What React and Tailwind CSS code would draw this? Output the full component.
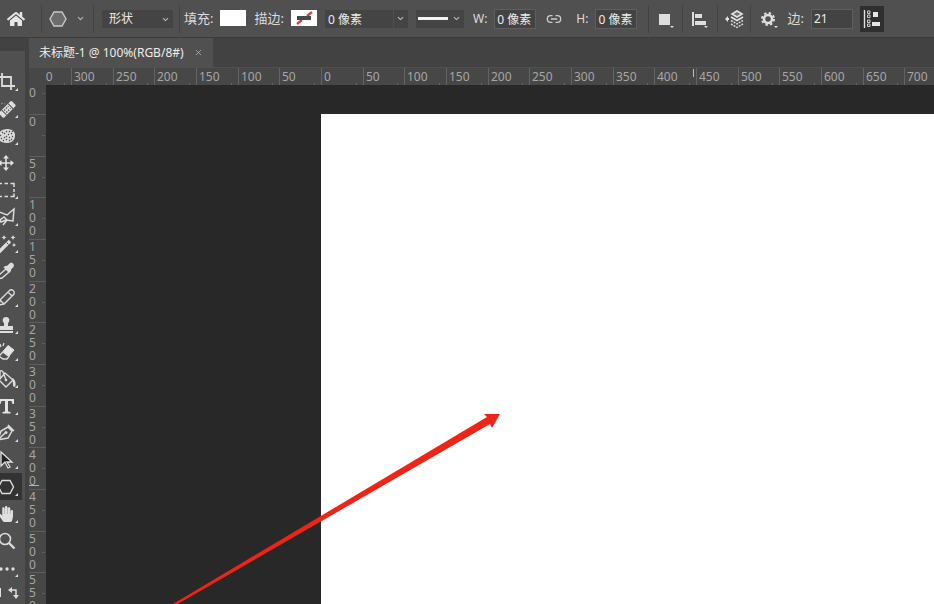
import { Search, ChevronDown, Link2, X } from "lucide-react";
import { FaHome, FaHandPaper } from "react-icons/fa";

// 50 document units on screen
const STEP = 125 / 3;

const stepSize = (index) =>
  Math.round((index + 1) * STEP) - Math.round(index * STEP);

const horizontalMarks = Array.from({ length: 22 }, (_, i) => i - 7);
const verticalMarks = Array.from({ length: 13 }, (_, i) => i - 1);

const SpongeIcon = () => (
  <svg viewBox="0 0 20 20" className="w-5 h-5 shrink-0" fill="none">
    <path
      d="M2 11c0-5 4-8 9-8 4 0 8 2 8 6s-2 8-8 8c-5 0-9-2-9-6Z"
      fill="#dadada"
    />
    <path
      d="M4 9l1 1M6 6l1 1M8 8l1-1M10 5l1 1M13 5l1 1M12 8l1 1M15 8l1-1M17 10l-1 1M5 13l1-1M8 11l1 1M10 10l1 1M7 14l1 1M10 14l1-1M13 12l1-1M13 15l1-1M16 13l-1 1M16 5l.8.8"
      stroke="#4c4c4c"
      strokeWidth="1.100"
    />
  </svg>
);

const BandageIcon = () => (
  <svg viewBox="0 0 20 20" className="w-5 h-5 shrink-0" fill="none">
    <path d="M2 9c0-4 4-5 7-4" stroke="#c6c6c6" strokeDasharray="1 2" />
    <g transform="rotate(-45 11 10)">
      <rect x="2" y="7" width="18" height="7" rx="1.5" fill="#dedede" />
      <path d="M6.500 7v7M15.500 7v7" stroke="#505050" />
      <path
        d="M8 9h6M8 12h6"
        stroke="#505050"
        strokeWidth="1.4"
        strokeDasharray="1.4 1.2"
      />
    </g>
  </svg>
);

const CropIcon = () => (
  <svg viewBox="0 0 20 20" className="w-5 h-5 shrink-0" fill="none">
    <path d="M6 1v13h13M1 5h14v13" stroke="#dcdcdc" strokeWidth="1.8" />
  </svg>
);

const MoveIcon = () => (
  <svg viewBox="0 0 20 20" className="w-5 h-5 shrink-0">
    <path d="M10 4v12M4 10h12" stroke="#e2e2e2" strokeWidth="1.6" />
    <path
      d="M10 2l3 3.500H7ZM10 18l3-3.500H7ZM2 10l3.500-3v6ZM18 10l-3.500-3v6Z"
      fill="#e2e2e2"
    />
  </svg>
);

const MarqueeIcon = () => (
  <svg viewBox="0 0 20 20" className="w-5 h-5 shrink-0" fill="none">
    <path
      d="M2 3.500h4M8.500 3.500h3.500M14.500 3.500H18V7M18 9v3M18 13.500v3h-3.500M12 16.500H8.500M6 16.500H2"
      stroke="#dcdcdc"
      strokeWidth="1.5"
    />
  </svg>
);

const LassoIcon = () => (
  <svg viewBox="0 0 20 20" className="w-5 h-5 shrink-0" fill="none">
    <path
      d="M1 4l10 4 7-6-1 12-7-1-5 2-1-2 4-3 3 3-4 5"
      stroke="#dcdcdc"
      strokeWidth="1.5"
    />
  </svg>
);

const WandIcon = () => (
  <svg viewBox="0 0 20 20" className="w-5 h-5 shrink-0">
    <path d="M3 18L14 7" stroke="#dcdcdc" strokeWidth="3.400" />
    <path d="M10.500 8.500l2 2" stroke="#505050" />
    <path
      d="M8 1l.8 1.700 1.700.8-1.700.8L8 6l-.8-1.700-1.700-.8 1.700-.8ZM17 1l.8 1.700 1.700.8-1.700.8L17 6l-.8-1.700-1.700-.8 1.700-.8ZM18 9l.7 1.300L20 11l-1.300.7L18 13l-.7-1.300L16 11l1.300-.7Z"
      fill="#dcdcdc"
    />
  </svg>
);

const DropperIcon = () => (
  <svg viewBox="0 0 20 20" className="w-5 h-5 shrink-0">
    <path
      d="M10 8l3 3-7 6-4 1 1-4Z"
      fill="none"
      stroke="#dcdcdc"
      strokeWidth="1.4"
    />
    <path
      d="M10 5l1.500-.5L14 2c2-1 5 1 3.500 4L15 8.500V10l-1.500 1.500-6-5L9 5Z"
      fill="#dcdcdc"
    />
  </svg>
);

const PencilIcon = () => (
  <svg viewBox="0 0 20 20" className="w-5 h-5 shrink-0" fill="none">
    <path
      d="M3 17l1-5L14 2c2-1 5 1 4 4L8 16ZM12 4l4 4M4 12l4 4"
      stroke="#dcdcdc"
      strokeWidth="1.4"
    />
  </svg>
);

const StampIcon = () => (
  <svg viewBox="0 0 20 20" className="w-5 h-5 shrink-0" fill="#dedede">
    <path d="M10 2c4 0 4 4 2 6v3h5v4H3v-4h5V8C6 6 6 2 10 2ZM3 16h14v2H3Z" />
  </svg>
);

const EraserIcon = () => (
  <svg viewBox="0 0 20 20" className="w-5 h-5 shrink-0" fill="none">
    <path d="M4 2l1 3M8 1l-1 3M2 7l2 1" stroke="#dcdcdc" strokeWidth="1.300" />
    <path d="M12 3.500l6 4.500-5 6-6-4.500Z" fill="#e4e4e4" stroke="#e4e4e4" />
    <path d="M7 10l6 4.500-2 2.500H7l-4-3Z" stroke="#dcdcdc" strokeWidth="1.4" />
  </svg>
);

const BucketIcon = () => (
  <svg viewBox="0 0 20 20" className="w-5 h-5 shrink-0" fill="none">
    <path
      d="M9 4l8 7-7 7-7-7ZM10 11L7 3C6 1 4 1 4 4v6"
      stroke="#dcdcdc"
      strokeWidth="1.4"
    />
    <circle cx="10" cy="11" r="1.300" fill="#dcdcdc" />
    <path d="M16 9c3 1 4 4 3.500 8-1 1.500-2.500 1-2.500-1 0-3-.5-4-1-7Z" fill="#dcdcdc" />
  </svg>
);

const TypeIcon = () => (
  <svg viewBox="0 0 20 20" className="w-5 h-5 shrink-0" fill="#e2e2e2">
    <path d="M3 3h15v5h-1.500L15.500 5H12v10.500l2.500.5v1.500h-8V16l2.500-.5V5H5.500l-1 3H3Z" />
  </svg>
);

const PenIcon = () => (
  <svg viewBox="0 0 20 20" className="w-5 h-5 shrink-0" fill="none">
    <path
      d="M2 17L5 8l7-4 4 4-4 7ZM3 16l6-6M12 2l6 6"
      stroke="#dcdcdc"
      strokeWidth="1.5"
    />
    <circle cx="10" cy="9.500" r="1.5" fill="#dcdcdc" />
  </svg>
);

const PointerIcon = () => (
  <svg viewBox="0 0 20 20" className="w-5 h-5 shrink-0">
    <path
      d="M5 2v14l4-4 3 6 2-1-3-5h5Z"
      fill="#222222"
      stroke="#e2e2e2"
      strokeWidth="1.3"
    />
  </svg>
);

const HexagonIcon = () => (
  <svg viewBox="0 0 20 20" className="w-5 h-5 shrink-0">
    <path
      d="M6 3h8l4 7-4 7H6L2 10Z"
      fill="#6c6c6c"
      stroke="#c8c8c8"
      strokeWidth="1.4"
    />
  </svg>
);

const SelectedHexagonIcon = () => (
  <svg viewBox="0 0 20 20" className="w-5 h-5 shrink-0" fill="none">
    <path
      d="M6 3.500h8l3.500 6.500-3.500 6.500H6L2.500 10Z"
      stroke="#dcdcdc"
      strokeWidth="1.4"
    />
  </svg>
);

const ZoomIcon = () => (
  <svg viewBox="0 0 20 20" className="w-5 h-5 shrink-0" fill="none">
    <circle cx="9" cy="8" r="5.500" stroke="#dcdcdc" strokeWidth="1.600" />
    <path d="M13 12l5.500 5.500" stroke="#dcdcdc" strokeWidth="2.400" />
  </svg>
);

const MoreIcon = () => (
  <svg viewBox="0 0 20 20" className="w-5 h-5 shrink-0" fill="#dedede">
    <circle cx="5" cy="11" r="1.700" />
    <circle cx="11" cy="11" r="1.700" />
    <circle cx="17" cy="11" r="1.700" />
  </svg>
);

const tools = [
  { label: "裁剪工具", icon: <CropIcon />, more: true },
  { label: "污点修复画笔工具", icon: <BandageIcon />, more: true },
  { label: "海绵工具", icon: <SpongeIcon />, more: true },
  { label: "移动工具", icon: <MoveIcon />, more: false },
  { label: "矩形选框工具", icon: <MarqueeIcon />, more: true },
  { label: "多边形套索工具", icon: <LassoIcon />, more: true },
  { label: "魔棒工具", icon: <WandIcon />, more: true },
  { label: "吸管工具", icon: <DropperIcon />, more: false },
  { label: "铅笔工具", icon: <PencilIcon />, more: true },
  { label: "仿制图章工具", icon: <StampIcon />, more: true },
  { label: "橡皮擦工具", icon: <EraserIcon />, more: true },
  { label: "油漆桶工具", icon: <BucketIcon />, more: true },
  { label: "文字工具", icon: <TypeIcon />, more: true },
  { label: "钢笔工具", icon: <PenIcon />, more: true },
  { label: "路径选择工具", icon: <PointerIcon />, more: true },
  {
    label: "多边形工具",
    icon: <SelectedHexagonIcon />,
    more: true,
    active: true,
  },
  {
    label: "抓手工具",
    icon: <FaHandPaper className="w-4 h-4 mx-0.5 text-[#e0e0e0]" />,
    more: true,
  },
  { label: "缩放工具", icon: <ZoomIcon />, more: false },
  { label: "编辑工具栏", icon: <MoreIcon />, more: true },
];

const Corner = () => (
  <svg viewBox="0 0 4 4" className="absolute right-1 bottom-1 w-[3px] h-[3px]">
    <path d="M4 0v4H0Z" fill="#e0e0e0" />
  </svg>
);

const Separator = () => <div className="w-px h-7 shrink-0 bg-[#434343]" />;

const Arrow = () => (
  <ChevronDown className="w-[9px] h-[9px] text-[#b8b8b8]" strokeWidth={3} />
);

const Field = ({ id, label, value }) => (
  <div className="flex items-center gap-[7px] shrink-0">
    <label htmlFor={id} className="text-[#dcdcdc]">
      {label}
    </label>
    <input
      id={id}
      defaultValue={value}
      className="w-[42px] h-5 px-[2px] bg-[#434343] border border-[#5e5e5e] text-[#ececec]"
    />
  </div>
);

const OptionsBar = () => (
  <header className="flex items-center h-[38px] shrink-0 pl-[7px] bg-[#505050] border-b border-[#3c3c3c] text-xs">
    <button aria-label="主页" className="shrink-0 mr-4">
      <FaHome className="w-[18px] h-[18px] text-[#e6e6e6]" />
    </button>
    <Separator />
    <button
      aria-label="工具预设"
      className="flex items-center gap-2 shrink-0 ml-[6px] mr-2"
    >
      <HexagonIcon />
      <Arrow />
    </button>
    <Separator />
    <div className="relative shrink-0 ml-2 mr-[6px]">
      <select
        aria-label="工具模式"
        className="appearance-none w-[71px] h-[18px] pl-[7px] bg-[#444444] text-[#ececec]"
      >
        <option>形状</option>
        <option>路径</option>
        <option>像素</option>
      </select>
      <div className="absolute right-[3px] top-[5px] pointer-events-none">
        <Arrow />
      </div>
    </div>
    <Separator />
    <div className="flex items-center gap-[7px] shrink-0 ml-1 mr-2">
      <label htmlFor="fill" className="text-[13px] text-[#dcdcdc]">
        填充:
      </label>
      <button id="fill" className="w-[26px] h-4 bg-white" />
    </div>
    <div className="flex items-center gap-[7px] shrink-0 mr-2">
      <label htmlFor="stroke" className="text-[13px] text-[#dcdcdc]">
        描边:
      </label>
      <button id="stroke" className="w-[26px] h-4 bg-white">
        <svg viewBox="0 0 26 16" className="w-[26px] h-4">
          <path
            d="M6 14l5-4M16 6l5-4"
            stroke="#c44"
            strokeWidth="2.400"
          />
          <rect x="6" y="6" width="14" height="4" fill="#484848" />
        </svg>
      </button>
    </div>
    <div className="flex shrink-0 gap-px mr-2">
      <input
        aria-label="描边宽度"
        defaultValue="0 像素"
        className="w-[68px] h-[18px] px-[3px] bg-[#444444] text-[#ececec]"
      />
      <button
        aria-label="描边宽度选项"
        className="flex items-center justify-center w-[14px] h-[18px] bg-[#444444]"
      >
        <Arrow />
      </button>
    </div>
    <button
      aria-label="描边类型"
      className="flex items-center gap-1 shrink-0 w-12 h-[18px] pl-[2px] mr-[9px] bg-[#444444]"
    >
      <span className="w-[30px] h-[3px] bg-[#f2f2f2]" />
      <Arrow />
    </button>
    <Field id="width" label="W:" value="0 像素" />
    <button
      aria-label="链接宽度和高度"
      className="shrink-0 ml-[10px] mr-[14px]"
    >
      <Link2 className="w-4 h-4 text-[#cccccc]" />
    </button>
    <Field id="height" label="H:" value="0 像素" />
    <div className="flex items-center shrink-0 ml-[11px]">
      <Separator />
      <button aria-label="路径操作" className="flex justify-center w-[33px]">
        <svg viewBox="0 0 20 20" className="w-5 h-5" fill="#dedede">
          <path d="M3 5h11v11H3ZM14 17h4l-2 2Z" />
        </svg>
      </button>
      <Separator />
      <button aria-label="路径对齐方式" className="flex justify-center w-[34px]">
        <svg viewBox="0 0 20 20" className="w-5 h-5" fill="#dedede">
          <path d="M2 3h2v14H2ZM5 5h7v4H5ZM5 12h11v4H5ZM14 17h4l-2 2Z" />
        </svg>
      </button>
      <Separator />
      <button aria-label="路径排列方式" className="flex justify-center w-8">
        <svg viewBox="0 0 20 20" className="w-5 h-5" fill="none">
          <path
            d="M13 2l5 3-5 3-5-3Z"
            fill="#707070"
            stroke="#e4e4e4"
            strokeWidth="1.600"
          />
          <path
            d="M7 8l6 3.500L19 8"
            stroke="#e0e0e0"
            strokeWidth="1.800"
          />
          <path
            d="M7 11.500l6 3.500 6-3.500M7 15l6 3.500 6-3.500"
            stroke="#d4d4d4"
            strokeWidth="1.500"
            strokeDasharray="2 1"
          />
          <path d="M1 10l3-3v2h1v2H4v2Z" fill="#e0e0e0" />
        </svg>
      </button>
      <Separator />
      <button aria-label="路径选项" className="flex justify-center w-9">
        <svg viewBox="0 0 20 20" className="w-5 h-5" fill="none">
          <circle cx="9" cy="10" r="4" stroke="#e0e0e0" strokeWidth="2.500" />
          <circle
            cx="9"
            cy="10"
            r="6"
            stroke="#e0e0e0"
            strokeWidth="2"
            strokeDasharray="2.400 2.312"
          />
          <path d="M15 17h4l-2 2Z" fill="#dedede" />
        </svg>
      </button>
    </div>
    <Field id="sides" label={<span className="text-[13px]">边:</span>} value="21" />
    <button
      aria-label="对齐边缘"
      aria-pressed="true"
      className="flex items-center justify-center shrink-0 w-6 h-[26px] ml-[7px] bg-[#2f2f2f]"
    >
      <svg viewBox="0 0 20 20" className="w-5 h-5" fill="none">
        <path d="M2.500 1v18" stroke="#e0e0e0" strokeWidth="1.400" />
        <path
          d="M5.500 2h2.500v2.500H5.500ZM5.500 6h2.500v2.500H5.500ZM5.500 11h2.500v2.500H5.500ZM5.500 15h2.500v2.500H5.500Z"
          stroke="#d0d0d0"
        />
        <path d="M11 3h5v5h-5ZM10 13h8v4h-8Z" fill="#e6e6e6" />
      </svg>
    </button>
  </header>
);

const ToolBar = () => (
  <aside className="flex flex-col w-[25px] shrink-0 mt-[13px] pt-[17px] bg-[#505050] overflow-hidden">
    {tools.map((tool) => (
      <button
        key={tool.label}
        aria-label={tool.label}
        className={`relative flex items-center w-[22px] h-[27px] shrink-0 ${
          tool.active ? "bg-[#333333]" : ""
        }`}
      >
        <span className="-ml-1 shrink-0">{tool.icon}</span>
        {tool.more && <Corner />}
      </button>
    ))}
    <button
      aria-label="切换前景色和背景色"
      className="flex items-center h-6 shrink-0"
    >
      <svg viewBox="0 0 20 20" className="w-5 h-5" fill="none">
        <path d="M0 5v9" stroke="#e2e2e2" strokeWidth="2" />
        <path d="M11 7h5v7" stroke="#dcdcdc" strokeWidth="1.500" />
        <path d="M12 4v6L8 7ZM13 12h6l-3 4Z" fill="#dcdcdc" />
      </svg>
    </button>
  </aside>
);

const HorizontalRuler = () => (
  <div className="flex h-[18px] shrink-0 bg-[#474747] border-t border-[#525252]">
    <div className="w-[17px] shrink-0" />
    <div className="relative flex flex-1 min-w-0 overflow-hidden">
      <div className="flex -ml-[17px]">
        {horizontalMarks.map((mark) => (
          <div
            key={mark}
            className="flex items-end justify-between shrink-0 pl-[2px] border-l border-[#636363] text-xs leading-4 text-[#a6a6a6]"
            style={{ width: stepSize(mark) }}
          >
            <span className="pt-[2px]">{Math.abs(mark * 50)}</span>
            <span className="w-px h-[2px] mr-[6px] bg-[#636363]" />
          </div>
        ))}
      </div>
      {/* cursor position */}
      <div className="absolute left-[647px] top-px w-px h-2 bg-[#c0c0c0]" />
    </div>
  </div>
);

const VerticalRuler = () => (
  <div className="relative w-[17px] shrink-0 bg-[#474747] overflow-hidden">
    <div className="flex flex-col -mt-[13px]">
      {verticalMarks.map((mark) => (
        <div
          key={mark}
          className="flex justify-between shrink-0 pr-px border-t border-[#5e5e5e] text-xs leading-[13px] text-[#a6a6a6]"
          style={{ height: stepSize(mark) }}
        >
          <div className="flex flex-col">
            {String(Math.abs(mark * 50))
              .split("")
              .map((digit, i) => (
                <span key={i}>{digit}</span>
              ))}
          </div>
          <span className="self-center w-[3px] h-px bg-[#5e5e5e]" />
        </div>
      ))}
    </div>
    {/* cursor position */}
    <div className="absolute left-0 top-[400px] w-[10px] h-px bg-[#b4b4b4]" />
  </div>
);

const Canvas = () => (
  <div className="relative flex flex-1 min-w-0 pl-[275px] pt-[29px] bg-[#282828] overflow-hidden">
    <div className="flex-1 bg-white" />
    <svg
      viewBox="0 0 328 192"
      className="absolute left-[127px] top-[328px] w-[328px] h-[192px]"
    >
      <path
        d="M0 191L314 4L311 1L327 1L319 15L317 11L3 192Z"
        fill="#ee2416"
      />
    </svg>
  </div>
);

const App = () => {
  return (
    <div className="flex flex-col h-screen overflow-hidden bg-[#424242] font-['Noto_Sans','Noto_Sans_CJK_SC',sans-serif]">
      <OptionsBar />
      <div className="flex flex-1 min-h-0">
        <ToolBar />
        <main className="flex flex-col flex-1 min-w-0 ml-1">
          <div className="flex h-[29px] shrink-0">
            <div className="flex items-center gap-[10px] px-[10px] bg-[#505050] text-xs text-[#ececec]">
              <span>未标题-1 @ 100%(RGB/8#)</span>
              <button aria-label="关闭">
                <X className="w-[9px] h-[9px] text-[#b4b4b4]" />
              </button>
            </div>
          </div>
          <HorizontalRuler />
          <div className="flex flex-1 min-h-0">
            <VerticalRuler />
            <Canvas />
          </div>
        </main>
      </div>
    </div>
  );
};

export default App;
